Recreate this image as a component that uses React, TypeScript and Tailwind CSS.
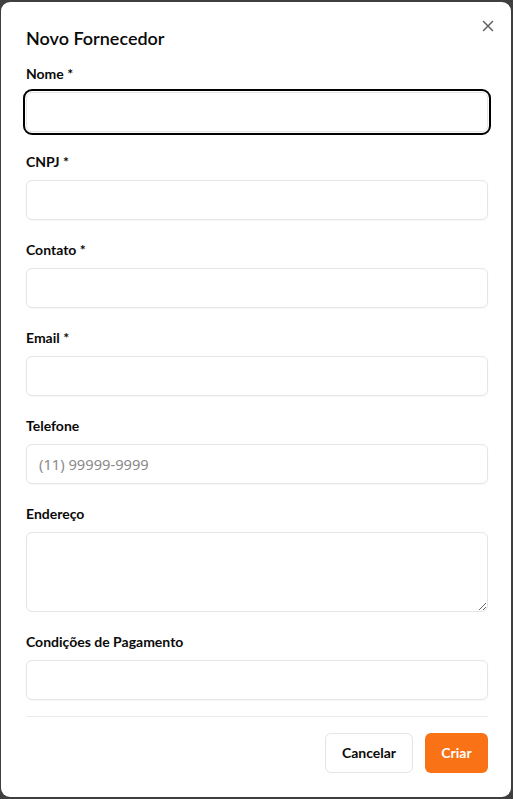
import React from "react";

const font = { fontFamily: 'Lato, "Noto Sans", sans-serif' };

function Label({ children }: { children: React.ReactNode }) {
  return <label className="block h-5 text-sm leading-5 font-bold text-[#0a0a0a]">{children}</label>;
}

function Field({ label, children, last }: { label: string; children: React.ReactNode; last?: boolean }) {
  return (
    <div className={last ? "" : "mb-5"}>
      <Label>{label}</Label>
      <div className="mt-2">{children}</div>
    </div>
  );
}

const inputCls =
  "block w-full h-10 rounded-md border border-[#e5e5e5] bg-white px-3 text-sm text-[#0a0a0a] placeholder:text-[#8a8a8a] outline-none shadow-[0_1px_2px_rgba(0,0,0,0.03)]";

export default function App() {
  return (
    <div className="w-[513px] h-[799px] bg-[#3f3f3f] pt-[2px] pl-[1px] pr-[2px] pb-[2px]" style={font}>
      <div className="relative h-full w-full rounded-[9px] bg-white pl-[25px] pr-[23px] pt-[22px]">
        <button className="absolute right-[13px] top-[14px] flex h-5 w-5 items-center justify-center text-[#5f5f5f]">
          <svg width="12" height="12" viewBox="0 0 12 12" fill="none" stroke="currentColor" strokeWidth="1.5" strokeLinecap="round">
            <path d="M1.5 1.5 10.5 10.5M10.5 1.5 1.5 10.5" />
          </svg>
        </button>
        <h2 className="h-7 text-lg leading-7 font-semibold text-[#0a0a0a]">Novo Fornecedor</h2>
        <div className="mt-3">
          <Field label="Nome *">
            <input className={inputCls} style={{ outline: "2px solid #000", outlineOffset: "1px" }} />
          </Field>
          <Field label="CNPJ *">
            <input className={inputCls} />
          </Field>
          <Field label="Contato *">
            <input className={inputCls} />
          </Field>
          <Field label="Email *">
            <input className={inputCls} />
          </Field>
          <Field label="Telefone">
            <input className={inputCls} placeholder="(11) 99999-9999" style={{ fontFamily: '"Noto Sans", sans-serif', fontSize: "14.7px" }} />
          </Field>
          <Field label="Endereço">
            <textarea className="block w-full h-20 rounded-md border border-[#e5e5e5] bg-white px-3 py-2 text-sm outline-none" />
          </Field>
          <Field label="Condições de Pagamento" last>
            <input className={inputCls} />
          </Field>
        </div>
        <div className="mt-4 h-px bg-[#ebebeb]" />
        <div className="mt-4 flex justify-end gap-3">
          <button className="h-10 w-[88px] rounded-md border border-[#e5e5e5] bg-white text-sm font-bold text-[#0a0a0a]">
            Cancelar
          </button>
          <button className="h-10 w-[63px] rounded-md bg-[#f97316] text-sm font-bold text-white">Criar</button>
        </div>
      </div>
    </div>
  );
}
